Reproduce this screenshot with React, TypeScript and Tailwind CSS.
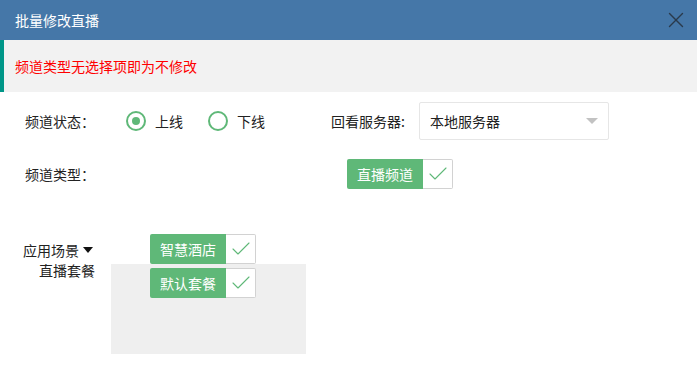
import { Check, X } from 'lucide-react';

const FONT = { fontFamily: '"Noto Sans CJK SC", "Noto Sans", sans-serif' };

const Tag = ({ label }: { label: string }) => (
  <div className="flex h-[30px]">
    <div className="flex items-center rounded-l-[2px] bg-[#5fb878] px-[10px] text-[14px] text-white">
      {label}
    </div>
    <div className="flex w-[30px] items-center justify-center rounded-r-[2px] border border-l-0 border-[#d2d2d2] bg-white">
      <Check className="h-[24px] w-[24px] text-[#5fb878]" strokeWidth={1.1} />
    </div>
  </div>
);

const Radio = ({ checked, label }: { checked?: boolean; label: string }) => (
  <div className="flex items-center">
    <span className="flex h-[20px] w-[20px] items-center justify-center rounded-full border-2 border-[#5fb878]">
      {checked && <span className="h-[8px] w-[8px] rounded-full bg-[#5fb878]" />}
    </span>
    <span className="ml-[9px] text-[14px] text-[#222]">{label}</span>
  </div>
);

export default function App() {
  return (
    <div className="h-[386px] w-[697px] overflow-hidden bg-white text-[#222]" style={FONT}>
      {/* Header */}
      <div className="flex h-[40px] items-center justify-between bg-[#4577a8] pl-[15px] pr-[8px]">
        <span className="text-[14px] text-white">批量修改直播</span>
        <X className="h-[26px] w-[26px] text-[#2a3a4c]" strokeWidth={1.3} />
      </div>

      {/* Notice */}
      <div className="flex h-[52px] items-center border-l-4 border-[#009688] bg-[#f2f2f2] pl-[11px]">
        <span className="text-[14px] text-[#ff0000]">频道类型无选择项即为不修改</span>
      </div>

      {/* Row 1 */}
      <div className="mt-[10px] flex h-[38px] items-center">
        <span className="ml-[25px] w-[101px] text-[14px]">频道状态：</span>
        <Radio checked label="上线" />
        <div className="ml-[25px]">
          <Radio label="下线" />
        </div>
        <span className="ml-[66px] w-[88px] text-[14px]">回看服务器:</span>
        <div className="flex h-[38px] w-[190px] items-center justify-between rounded-[2px] border border-[#e6e6e6] pl-[10px] pr-[10px]">
          <span className="text-[14px]">本地服务器</span>
          <span className="h-0 w-0 border-x-[6px] border-t-[6px] border-x-transparent border-t-[#c2c2c2]" />
        </div>
      </div>

      {/* Row 2 */}
      <div className="mt-[19px] flex h-[30px] items-center">
        <span className="ml-[25px] w-[322px] text-[14px]">频道类型：</span>
        <Tag label="直播频道" />
      </div>

      {/* Row 3 */}
      <div className="relative mt-[45px] flex">
        <div className="absolute left-[111px] top-[30px] h-[90px] w-[195px] bg-[#efefef]" />
        <div className="ml-[23px] mt-[6px] flex w-[127px] flex-col text-[14px] leading-[20px]">
          <span className="flex items-center">
            应用场景
            <span className="ml-[4px] h-0 w-0 border-x-[5px] border-t-[6px] border-x-transparent border-t-[#111]" />
          </span>
          <span className="ml-[16px]">直播套餐</span>
        </div>
        <div className="relative flex flex-col gap-[4px]">
          <Tag label="智慧酒店" />
          <Tag label="默认套餐" />
        </div>
      </div>
    </div>
  );
}
